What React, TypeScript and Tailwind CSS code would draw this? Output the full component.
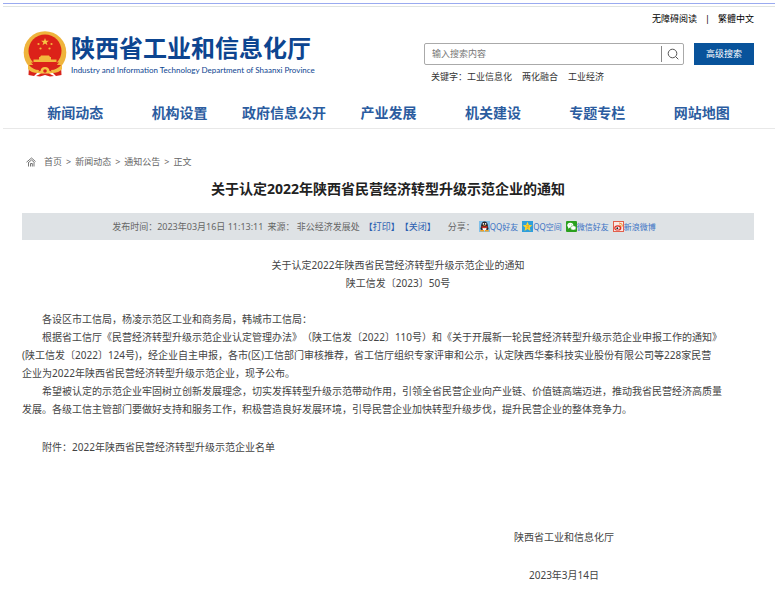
import type { ReactNode } from "react";

const navItems = ["新闻动态", "机构设置", "政府信息公开", "产业发展", "机关建设", "专题专栏", "网站地图"];
const keywords = ["工业信息化", "两化融合", "工业经济"];
const crumbs = ["首页", "新闻动态", "通知公告"];

function Emblem() {
  return (
    <svg viewBox="0 0 44 46" className="h-[46px] w-11 shrink-0" aria-hidden="true">
      <circle cx="22" cy="21.5" r="21.3" fill="#efb43c" />
      <path d="M6 34 L38 34 L38.500 44 L33 45 L30 42 L14 42 L11 45 L5.500 44 Z" fill="#d8231b" />
      <path d="M5 33 Q10 39 16 39 L15 42 Q8 42 5 38 Z M39 33 Q34 39 28 39 L29 42 Q36 42 39 38 Z" fill="#f3bb40" />
      <circle cx="22" cy="20" r="16.500" fill="#dc2219" />
      <path d="M22 7 l1 2.700 h2.900 l-2.300 1.800 .9 2.800 -2.500 -1.700 -2.500 1.700 .9 -2.800 -2.300 -1.800 h2.900 Z" fill="#f6c544" />
      <g fill="#f3b73d">
        <circle cx="15.500" cy="13" r="1.100" />
        <circle cx="28.500" cy="13" r="1.100" />
        <circle cx="17.500" cy="17.500" r="1.100" />
        <circle cx="26.500" cy="17.500" r="1.100" />
        <path d="M17 26 L18 24.500 H26 L27 26 Z M16 28.500 V26 H28 V28.500 Z M10.500 28.500 H33.500 V31 H10.500 Z" />
      </g>
      <path d="M8 31.500 H36 L33 35 H11 Z" fill="#dc2219" />
      <path d="M22 36 a4.500 4.500 0 0 1 4.500 4 l4 1 q-4 3 -8.500 1 q-4.500 2 -8.500 -1 l4 -1 a4.500 4.500 0 0 1 4.500 -4 Z" fill="#f6c544" />
      <circle cx="22" cy="40" r="1.800" fill="#dc2219" />
      <path d="M13 45 L18 42.500 H26 L31 45 L27 45.500 L22 44 L17 45.500 Z" fill="#dc2219" />
    </svg>
  );
}

function SearchIcon() {
  return (
    <svg viewBox="0 0 12 12" className="size-3" fill="none" stroke="#555" strokeWidth="1" aria-hidden="true">
      <circle cx="5.500" cy="5.500" r="4.300" />
      <path d="M8.600 8.600 L11.300 11.300" />
    </svg>
  );
}

function HomeIcon() {
  return (
    <svg viewBox="0 0 10 10" className="size-[10px]" fill="none" stroke="#777" strokeWidth="1" aria-hidden="true">
      <path d="M.5 5.200 L5.500 1 L9.500 4.500 M2 6 L5.500 3 L8.500 5.500 M2.500 6 V9.500 M8 5.500 V9.500 M4.500 9.500 V6.500 H6.300 V9.500" />
    </svg>
  );
}

const QqIcon = (
  <svg viewBox="0 0 11 11" className="size-[11px]" aria-hidden="true">
    <rect width="11" height="11" fill="#7fc0ea" />
    <path d="M2.500 9 Q.8 8 2 5.500 Q2.300 .6 5.500 .6 Q8.700 .6 9 5.500 Q10.200 8 8.500 9 Z" fill="#26262c" />
    <ellipse cx="5.500" cy="7.800" rx="2.100" ry="1.600" fill="#fff" />
    <path d="M2.600 5 Q5.500 6.600 8.400 5 L8.600 6.600 Q5.500 8 2.400 6.600 Z" fill="#d93025" />
    <circle cx="4.400" cy="2.900" r=".8" fill="#fff" />
    <circle cx="6.600" cy="2.900" r=".8" fill="#fff" />
    <path d="M3.800 4.300 H7.200 L5.500 5.200 Z M1.300 9 H5 V10.600 H1.300 Z M6 9 H9.700 V10.600 H6 Z" fill="#f4a020" />
  </svg>
);

const QzoneIcon = (
  <svg viewBox="0 0 11 11" className="size-[11px]" aria-hidden="true">
    <rect width="11" height="11" fill="#2f9fdc" />
    <path d="M5.500 .8 L6.900 3.900 L10.300 4.200 L7.700 6.500 L8.500 9.900 L5.500 8.100 L2.500 9.900 L3.300 6.500 L.7 4.200 L4.100 3.900 Z" fill="#fbd82f" />
    <path d="M4 4.700 H7 L4.700 6.900 H7" fill="none" stroke="#e89a17" strokeWidth=".7" />
  </svg>
);

const WechatIcon = (
  <svg viewBox="0 0 11 11" className="size-[11px]" aria-hidden="true">
    <rect width="11" height="11" rx="1" fill="#2ba01e" />
    <ellipse cx="4.300" cy="4.300" rx="3" ry="2.500" fill="#fff" />
    <path d="M2.300 5.800 L2 7.800 L4 6.600 Z" fill="#fff" />
    <ellipse cx="7.300" cy="6.900" rx="2.700" ry="2.200" fill="#fff" stroke="#2ba01e" strokeWidth=".5" />
    <circle cx="3.300" cy="3.800" r=".4" fill="#2ba01e" />
    <circle cx="5.300" cy="3.800" r=".4" fill="#2ba01e" />
  </svg>
);

const WeiboIcon = (
  <svg viewBox="0 0 11 11" className="size-[11px]" aria-hidden="true">
    <rect x=".5" y=".5" width="10" height="10" fill="#fbe9e4" stroke="#e2604c" />
    <ellipse cx="4.800" cy="6.900" rx="3.600" ry="2.700" fill="#dd2c22" />
    <ellipse cx="4.600" cy="7.100" rx="2.200" ry="1.600" fill="#fff" />
    <circle cx="4.300" cy="7.200" r="1" fill="#222" />
    <path d="M6.300 3.800 A2 2 0 0 1 8 6 M6 2 A3.500 3.500 0 0 1 9.600 5.500" fill="none" stroke="#f08a24" strokeWidth=".9" />
  </svg>
);

const shares: { label: string; icon: ReactNode }[] = [
  { label: "QQ好友", icon: QqIcon },
  { label: "QQ空间", icon: QzoneIcon },
  { label: "微信好友", icon: WechatIcon },
  { label: "新浪微博", icon: WeiboIcon },
];

export default function App() {
  return (
    <div
      lang="zh-CN"
      className="bg-white font-['Noto_Sans','Noto_Sans_CJK_SC',sans-serif] text-[10px] leading-[18px] text-[#444] [text-spacing-trim:space-all]"
    >
      <div className="flex flex-col gap-[2px] px-[3px] pt-[3px]">
        <div className="h-px bg-[#9aaaf0]" />
        <div className="h-px bg-[#e0e4e1]" />
      </div>

      <header className="mx-[3px] border-b border-[#e8e8e8] pr-[21px] pl-5">
        <div className="flex justify-between">
          <a href="#" className="flex items-start pt-6">
            <Emblem />
            <span className="ml-1 flex flex-col text-[#0d4590]">
              <span className="mt-1 text-[24px] leading-[26px] font-bold">陕西省工业和信息化厅</span>
              <span className="mt-[3px] font-[Lato,sans-serif] text-[8px] leading-[12px] whitespace-nowrap">
                Industry and Information Technology Department of Shaanxi Province
              </span>
            </span>
          </a>
          <div className="flex flex-col pt-1 text-[9px] text-[#333]">
            <div className="flex justify-end gap-2 leading-[16px] text-black">
              <a href="#">无障碍阅读</a>
              <span>|</span>
              <a href="#">繁體中文</a>
            </div>
            <form className="mt-4 flex gap-[10px]" onSubmit={(e) => e.preventDefault()}>
              <div className="flex h-[22px] w-[260px] items-center rounded-[2px] border border-[#aaa]">
                <input
                  type="text"
                  aria-label="搜索"
                  placeholder="输入搜索内容"
                  className="min-w-0 flex-1 pl-[7px] outline-none placeholder:text-[#777]"
                />
                <button
                  type="submit"
                  aria-label="提交搜索"
                  className="flex h-4 w-[22px] items-center justify-center border-l border-[#888]"
                >
                  <SearchIcon />
                </button>
              </div>
              <button type="button" className="h-[22px] w-[60px] bg-[#08539b] text-white">
                高级搜索
              </button>
            </form>
            <div className="mt-[3px] flex gap-[10px] pl-[7px]">
              <span className="-mr-[10px]">关键字：</span>
              {keywords.map((k) => (
                <a key={k} href="#">
                  {k}
                </a>
              ))}
            </div>
          </div>
        </div>
        <nav className="mt-4 grid grid-cols-7 pb-1 text-center text-[14px] leading-[22px] font-bold whitespace-nowrap text-[#2b5c9f]">
          {navItems.map((n) => (
            <a key={n} href="#">
              {n}
            </a>
          ))}
        </nav>
      </header>

      <main className="pr-6 pl-[22px]">
        <div className="mt-6 flex items-center pl-1 text-[9px] text-[#666]">
          <HomeIcon />
          <div className="ml-2 flex gap-1">
            {crumbs.map((c) => (
              <span key={c} className="flex gap-1">
                <a href="#">{c}</a>
                <span>&gt;</span>
              </span>
            ))}
            <span>正文</span>
          </div>
        </div>

        <h1 className="mt-2 text-center text-[14px] leading-[20px] font-bold text-[#222]">
          关于认定2022年陕西省民营经济转型升级示范企业的通知
        </h1>

        <div className="mt-[14px] flex h-[27px] items-center justify-center bg-[#dee2e5] pr-2 text-[9px] whitespace-nowrap text-[#666]">
          <span>发布时间：2023年03月16日 11:13:11</span>
          <span className="ml-1">来源： 非公经济发展处</span>
          <button type="button" className="ml-1 text-[#2a5db0]">
            【打印】
          </button>
          <button type="button" className="text-[#2a5db0]">
            【关闭】
          </button>
          <span className="ml-3">分享：</span>
          <div className="ml-1 flex gap-1 text-[8px] text-[#3a72c4]">
            {shares.map((s) => (
              <a key={s.label} href="#" className="flex items-center">
                {s.icon}
                {s.label}
              </a>
            ))}
          </div>
        </div>

        <article className="mt-4 whitespace-nowrap">
          <p className="text-center indent-5">关于认定2022年陕西省民营经济转型升级示范企业的通知</p>
          <p className="text-center indent-5">陕工信发〔2023〕50号</p>

          <p className="mt-[18px] indent-5">各设区市工信局，杨凌示范区工业和商务局，韩城市工信局：</p>
          <p className="indent-5">
            根据省工信厅《民营经济转型升级示范企业认定管理办法》（陕工信发〔2022〕110号）和《关于开展新一轮民营经济转型升级示范企业申报工作的通知》
            <br />
            (陕工信发〔2022〕124号)，经企业自主申报，各市(区)工信部门审核推荐，省工信厅组织专家评审和公示，认定陕西华秦科技实业股份有限公司等228家民营
            <br />
            企业为2022年陕西省民营经济转型升级示范企业，现予公布。
          </p>
          <p className="indent-5">
            希望被认定的示范企业牢固树立创新发展理念，切实发挥转型升级示范带动作用，引领全省民营企业向产业链、价值链高端迈进，推动我省民营经济高质量
            <br />
            发展。各级工信主管部门要做好支持和服务工作，积极营造良好发展环境，引导民营企业加快转型升级步伐，提升民营企业的整体竞争力。
          </p>

          <p className="mt-5 indent-5">附件：2022年陕西省民营经济转型升级示范企业名单</p>

          <div className="mt-[72px] mr-[140px] ml-auto w-fit pb-4 text-center">
            <p>陕西省工业和信息化厅</p>
            <p className="mt-5">2023年3月14日</p>
          </div>
        </article>
      </main>
    </div>
  );
}
